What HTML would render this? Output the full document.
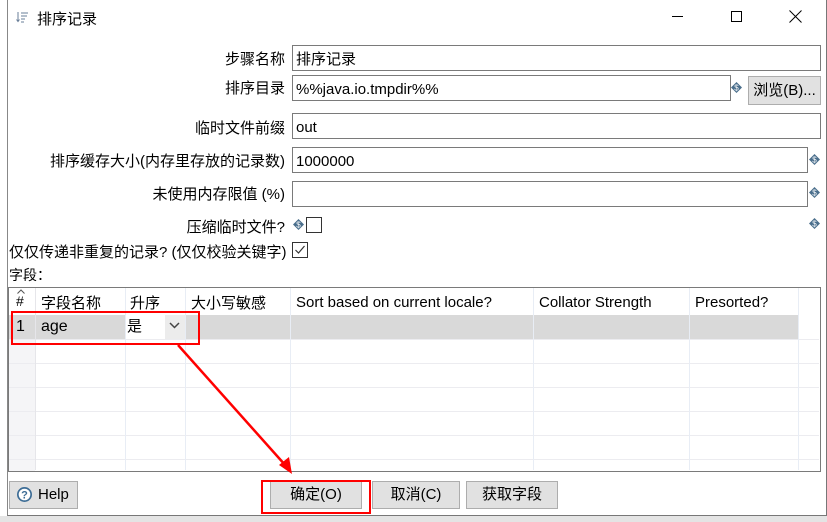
<!DOCTYPE html>
<html><head><meta charset="utf-8"><style>
*{box-sizing:border-box;margin:0;padding:0}
body{width:827px;height:522px;overflow:hidden;background:#e4e4e4;position:relative;font-family:"Liberation Sans","Noto Sans CJK SC",sans-serif;font-size:15px;color:#000}
.a{position:absolute}
#win{left:7px;top:0;width:820px;height:516px;background:#fff;border-left:1px solid #888;border-right:1px solid #777;border-bottom:1px solid #777}
.lbl{position:absolute;right:542px;text-align:right;white-space:nowrap;font-size:15px}
.in{position:absolute;border:1px solid #7a7a7a;background:#fff;padding-left:3px;padding-top:2px;line-height:23px;font-size:15px}
.btn{position:absolute;background:#e1e1e1;border:1px solid #adadad;text-align:center;font-size:15px;line-height:25px}
.d{position:absolute;width:11px;height:11px}
.vl{position:absolute;top:288px;height:182px;width:1px;background:#e8edf5}
.hl{position:absolute;left:9px;width:810px;height:1px;background:#ececf0}
</style></head><body>
<div class="a" style="left:0;top:0;width:7px;height:516px;background:#fff"></div>
<div id="win" class="a"></div>
<svg class="a" style="left:16px;top:11px" width="13" height="12"><path d="M2 1v9M0.5 8.5L2 10.5 3.5 8.5M5 2h7M5 5h6M5 8h4M5 11h3" stroke="#6a7f99" stroke-width="1" fill="none"/></svg>
<div class="a" style="left:37px;top:8px;font-size:15px">排序记录</div>
<div class="a" style="left:672px;top:16px;width:11px;height:1px;background:#000"></div>
<div class="a" style="left:731px;top:11px;width:11px;height:11px;border:1px solid #000"></div>
<svg class="a" style="left:789px;top:10px" width="13" height="13"><path d="M0.5 0.5L12.5 12.5M12.5 0.5L0.5 12.5" stroke="#000"/></svg>

<div class="lbl" style="top:48px">步骤名称</div>
<div class="in" style="left:292px;top:45px;width:529px;height:26px">排序记录</div>
<div class="lbl" style="top:77px">排序目录</div>
<div class="in" style="left:292px;top:75px;width:439px;height:26px">%%java.io.tmpdir%%</div>
<div class="btn" style="left:748px;top:76px;width:73px;height:29px;line-height:27px">浏览(B)...</div>
<div class="lbl" style="top:117px">临时文件前缀</div>
<div class="in" style="left:292px;top:113px;width:529px;height:26px">out</div>
<div class="lbl" style="top:150px">排序缓存大小(内存里存放的记录数)</div>
<div class="in" style="left:292px;top:147px;width:516px;height:26px">1000000</div>
<div class="lbl" style="top:183px">未使用内存限值 (%)</div>
<div class="in" style="left:292px;top:181px;width:516px;height:26px"></div>
<div class="lbl" style="top:216px">压缩临时文件?</div>
<div class="a" style="left:306px;top:217px;width:16px;height:16px;border:1px solid #333;background:#fff"></div>
<div class="a" style="left:9px;top:241px;font-size:15px">仅仅传递非重复的记录? (仅仅校验关键字)</div>
<div class="a" style="left:292px;top:242px;width:16px;height:16px;border:1px solid #333;background:#fff"></div>
<svg class="a" style="left:294px;top:244px" width="12" height="12"><path d="M1.5 6L4.5 9 10.5 2" stroke="#333" stroke-width="1.2" fill="none"/></svg>
<div class="a" style="left:9px;top:265px;font-size:14px">字段：</div>

<svg width="0" height="0" style="position:absolute"><defs><g id="dm"><path d="M5.5 0L11 5.5 5.5 11 0 5.5z" fill="#4a6e8c"/><text x="5.5" y="8.5" font-size="8" fill="#fff" text-anchor="middle" font-family="Liberation Sans">$</text></g></defs></svg>
<svg class="d" style="left:731px;top:82px"><use href="#dm"/></svg>
<svg class="d" style="left:809px;top:154px"><use href="#dm"/></svg>
<svg class="d" style="left:809px;top:187px"><use href="#dm"/></svg>
<svg class="d" style="left:809px;top:218px"><use href="#dm"/></svg>
<svg class="d" style="left:293px;top:219px"><use href="#dm"/></svg>

<div class="a" style="left:8px;top:287px;width:813px;height:185px;border:1px solid #7a7a7a;background:#fff"></div>
<div class="a" style="left:9px;top:315px;width:26px;height:156px;background:#f5f5f7"></div>
<div class="a" style="left:35px;top:315px;width:763px;height:24px;background:#d9d9d9"></div>
<div class="a" style="left:125px;top:315px;width:60px;height:24px;background:#fff"></div>
<div class="a" style="left:165px;top:315px;width:20px;height:24px;background:#ececec"></div>
<div class="a" style="left:9px;top:315px;width:26px;height:24px;background:#d9d9d9"></div>
<div class="hl" style="top:339px"></div><div class="hl" style="top:363px"></div><div class="hl" style="top:387px"></div><div class="hl" style="top:411px"></div><div class="hl" style="top:435px"></div><div class="hl" style="top:459px"></div>
<div class="vl" style="left:35px;background:#e6e6ea"></div><div class="vl" style="left:125px"></div><div class="vl" style="left:185px"></div><div class="vl" style="left:290px"></div><div class="vl" style="left:533px"></div><div class="vl" style="left:689px"></div><div class="vl" style="left:798px"></div>
<div class="a" style="left:16px;top:293px;font-size:14px">#</div>
<svg class="a" style="left:17px;top:289px" width="8" height="5"><path d="M0.5 4.5L4 1 7.5 4.5" stroke="#555" fill="none"/></svg>
<div class="a" style="left:41px;top:292px">字段名称</div>
<div class="a" style="left:130px;top:292px">升序</div>
<div class="a" style="left:191px;top:292px">大小写敏感</div>
<div class="a" style="left:296px;top:294px">Sort based on current locale?</div>
<div class="a" style="left:539px;top:294px">Collator Strength</div>
<div class="a" style="left:695px;top:294px">Presorted?</div>
<div class="a" style="left:16px;top:318px;font-size:16px">1</div>
<div class="a" style="left:41px;top:318px;font-size:16px">age</div>
<div class="a" style="left:127px;top:315px">是</div>
<svg class="a" style="left:169px;top:322px" width="11" height="7"><path d="M1 1L5.5 5.5 10 1" stroke="#444" stroke-width="1.5" fill="none"/></svg>

<div class="btn" style="left:9px;top:481px;width:69px;height:28px;text-align:left;padding-left:28px">Help</div>
<svg class="a" style="left:16px;top:486px" width="17" height="17"><circle cx="8.5" cy="8.5" r="7.5" fill="#3d6d96"/><circle cx="8.5" cy="8.5" r="5.8" fill="#fff"/><text x="8.5" y="12.5" font-size="11" font-weight="bold" fill="#3d6d96" text-anchor="middle" font-family="Liberation Sans">?</text></svg>
<div class="btn" style="left:270px;top:481px;width:92px;height:28px">确定(O)</div>
<div class="btn" style="left:372px;top:481px;width:88px;height:28px">取消(C)</div>
<div class="btn" style="left:466px;top:481px;width:92px;height:28px">获取字段</div>

<div class="a" style="left:11px;top:311px;width:189px;height:34px;border:2px solid #f00"></div>
<div class="a" style="left:261px;top:480px;width:110px;height:34px;border:2px solid #f00"></div>
<svg class="a" style="left:0;top:0" width="827" height="522"><line x1="178" y1="345" x2="286" y2="466" stroke="#f00" stroke-width="2.5"/><path d="M292 474L279 465 289 457z" fill="#f00"/></svg>
</body></html>
